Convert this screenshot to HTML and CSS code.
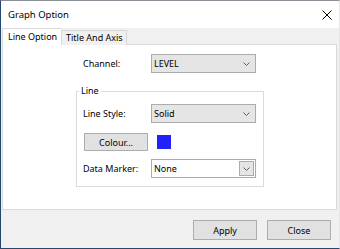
FILE: index.html
```html
<!DOCTYPE html>
<html lang="en">
<head>
    <meta charset="UTF-8">
    <title>Graph Option</title>
    <link rel="stylesheet" href="styles.css">
</head>
<body>
    <div class="dialog">
        <div class="titlebar">
            <span class="title">Graph Option</span>
            <svg class="close-icon" width="10" height="10" viewBox="0 0 10 10">
                <path d="M0.5 0.5 L9.5 9.5 M9.5 0.5 L0.5 9.5" stroke="#000" stroke-width="1" fill="none"/>
            </svg>
        </div>

        <div class="main">
            <div class="tabs">
                <div class="tab active">Line Option</div>
                <div class="tab">Title And Axis</div>
            </div>

            <div class="panel">
                <div class="row channel-row">
                    <span class="label">Channel:</span>
                    <div class="combo">
                        <span>LEVEL</span>
                        <svg class="chevron" width="7" height="4" viewBox="0 0 7 4"><path d="M0.5 0.5 L3.5 3.5 L6.5 0.5" stroke="#606060" fill="none"/></svg>
                    </div>
                </div>

                <fieldset class="group">
                    <legend>Line</legend>
                    <div class="row">
                        <span class="label">Line Style:</span>
                        <div class="combo">
                            <span>Solid</span>
                            <svg class="chevron" width="7" height="4" viewBox="0 0 7 4"><path d="M0.5 0.5 L3.5 3.5 L6.5 0.5" stroke="#606060" fill="none"/></svg>
                        </div>
                    </div>
                    <div class="row colour-row">
                        <button class="btn colour-btn">Colour...</button>
                        <span class="swatch"></span>
                    </div>
                    <div class="row marker-row">
                        <span class="label">Data Marker:</span>
                        <div class="combo editable">
                            <span>None</span>
                            <span class="drop-btn">
                                <svg width="7" height="4" viewBox="0 0 7 4"><path d="M0.5 0.5 L3.5 3.5 L6.5 0.5" stroke="#606060" fill="none"/></svg>
                            </span>
                        </div>
                    </div>
                </fieldset>
            </div>

            <div class="footer">
                <button class="btn">Apply</button>
                <button class="btn">Close</button>
            </div>
        </div>
    </div>
</body>
</html>
```

FILE: styles.css
```css
/* Reset */
* {
    margin: 0;
    padding: 0;
    box-sizing: border-box;
}

body {
    font-family: "Noto Sans", "Open Sans", sans-serif;
    font-size: 9px;
    color: #000;
    background: #fff;
}

/* Window frame */
.dialog {
    width: 340px;
    height: 249px;
    display: flex;
    flex-direction: column;
    background: #f0f0f0;
    border-top: 1px solid #8a8f96;
    border-left: 1px solid #24476f;
    border-bottom: 1px solid #24476f;
    border-right: 1px solid #e6e6e6;
}

.titlebar {
    height: 27px;
    background: #fff;
    display: flex;
    align-items: center;
    justify-content: space-between;
    padding: 0 7px 0 7px;
}

.title {
    font-size: 9.5px;
    line-height: 27px;
}

.close-icon {
    display: block;
}

/* Tab control */
.main {
    flex: 1;
    display: flex;
    flex-direction: column;
    padding: 0 2px 0 1px;
}

.tabs {
    height: 17px;
    display: flex;
    align-items: flex-end;
    position: relative;
    z-index: 1;
    margin-bottom: -1px;
}

.tab {
    height: 15px;
    line-height: 14px;
    padding: 0 3px 0 4px;
    border: 1px solid #d9d9d9;
    border-bottom: none;
    background: #f0f0f0;
}

.tab.active {
    height: 18px;
    line-height: 16px;
    width: 59px;
    padding: 0 0 0 5px;
    background: #fff;
    margin-bottom: -1px;
    border-right: none;
}

.panel {
    height: 166px;
    background: #fff;
    border: 1px solid #d9d9d9;
    padding-top: 9px;
}

/* Form rows */
.row {
    display: flex;
    align-items: center;
}

.channel-row {
    margin-left: 80px;
}

.label {
    width: 68px;
}

.combo {
    width: 105px;
    height: 19px;
    display: flex;
    align-items: center;
    justify-content: space-between;
    padding: 0 5px 0 2px;
    background: #e5e5e5;
    border: 1px solid #acacac;
}

.chevron {
    display: block;
}

.combo.editable {
    background: #fff;
    padding: 0 1px 0 2px;
}

.drop-btn {
    width: 15px;
    height: 15px;
    display: flex;
    align-items: center;
    justify-content: center;
    background: #e5e5e5;
    border: 1px solid #acacac;
}

/* Group box */
.group {
    width: 188px;
    margin: 11px 0 0 73px;
    padding: 6px 6px 8px 6px;
    border: 1px solid #dcdcdc;
}

.group legend {
    line-height: 14px;
    padding: 0 2px;
    margin-left: -4px;
}

.colour-row {
    margin-top: 10px;
}

.marker-row {
    margin-top: 8px;
}

.swatch {
    width: 14px;
    height: 14px;
    margin-left: 9px;
    background: #2121ff;
}

/* Buttons */
.btn {
    width: 64px;
    height: 20px;
    font-family: inherit;
    font-size: 9px;
    color: #000;
    background: #e1e1e1;
    border: 1px solid #adadad;
}

.colour-btn {
    height: 18px;
    margin-left: 1px;
}

.footer {
    flex: 1;
    display: flex;
    justify-content: flex-end;
    gap: 10px;
    padding: 10px 6px 0 0;
}
```
